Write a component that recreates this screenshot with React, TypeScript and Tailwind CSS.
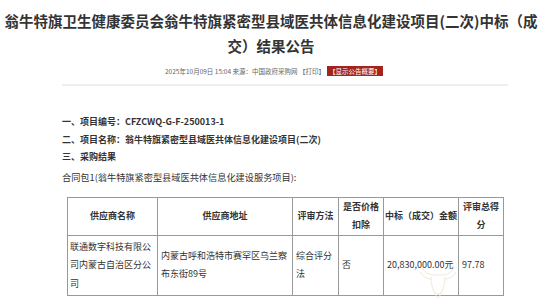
const font = { fontFamily: '"Noto Sans CJK SC", "Noto Sans", sans-serif' };

const App = () => {
  return (
    <div className="relative w-[550px] h-[298px] overflow-hidden bg-white text-[#333]" style={font}>
      <h1 className="w-[542px] pt-[8px] text-center text-[14.5px] font-bold leading-[25px] text-[#333]">
        翁牛特旗卫生健康委员会翁牛特旗紧密型县域医共体信息化建设项目(二次)中标（成交）结果公告
      </h1>
      <div className="mt-[8px] flex items-center pl-[165px] text-[6.5px] leading-[10px] text-[#666]">
        <span>2025年10月09日 15:04 来源：中国政府采购网 【打印】</span>
        <span className="ml-[2px] bg-[#a3231f] px-[2px] leading-[10px] text-white">【显示公告概要】</span>
      </div>
      <div className="px-[62px]">
        <div className="mt-[8px] h-[2px] w-[446px] bg-[#eeeeee]" />
        <div className="mt-[27px] flex flex-col text-[9px] font-bold leading-[17.5px]">
          <p>一、项目编号：CFZCWQ-G-F-250013-1</p>
          <p>二、项目名称：翁牛特旗紧密型县域医共体信息化建设项目(二次)</p>
          <p>三、采购结果</p>
        </div>
        <p className="mt-[2px] text-[9.2px] leading-[18px]">合同包1(翁牛特旗紧密型县域医共体信息化建设服务项目):</p>
        <table className="ml-[5px] mt-[11px] w-[437px] table-fixed border-collapse text-[9px] leading-[18.5px]">
          <colgroup>
            <col className="w-[90px]" />
            <col className="w-[135px]" />
            <col className="w-[46px]" />
            <col className="w-[45px]" />
            <col className="w-[75px]" />
            <col className="w-[45px]" />
          </colgroup>
          <thead>
            <tr className="h-[37px] font-bold">
              <th className="border border-[#999] px-[2px]">供应商名称</th>
              <th className="border border-[#999] px-[2px]">供应商地址</th>
              <th className="border border-[#999] px-[2px]">评审方法</th>
              <th className="border border-[#999] px-[2px]">是否价格扣除</th>
              <th className="border border-[#999] px-0 whitespace-nowrap">中标（成交）金额</th>
              <th className="border border-[#999] px-[2px]">评审总得分</th>
            </tr>
          </thead>
          <tbody>
            <tr className="align-middle">
              <td className="border border-[#999] px-[2px] py-[2px]">联通数字科技有限公司内蒙古自治区分公司</td>
              <td className="border border-[#999] px-[3px]">内蒙古呼和浩特市赛罕区乌兰察布东街89号</td>
              <td className="border border-[#999] px-[3px]">综合评分法</td>
              <td className="border border-[#999] px-[3px]">否</td>
              <td className="border border-[#999] px-[3px] whitespace-nowrap">20,830,000.00元</td>
              <td className="border border-[#999] px-[3px]">97.78</td>
            </tr>
          </tbody>
        </table>
      </div>
      <svg className="absolute left-[416px] top-[262px]" width="44" height="40" viewBox="0 0 44 40" fill="none" stroke="#f1e9d8" strokeWidth="1">
        <path d="M6 6 C10 12 14 13 18 13 L26 13 C30 13 34 12 38 6" />
        <path d="M4 10 C8 16 12 17 15 17 M40 10 C36 16 32 17 29 17" />
        <path d="M15 15 C15 24 18 32 22 36 C26 32 29 24 29 15" />
        <path d="M19 30 C20 33 24 33 25 30" />
      </svg>
    </div>
  );
};

export default App;
